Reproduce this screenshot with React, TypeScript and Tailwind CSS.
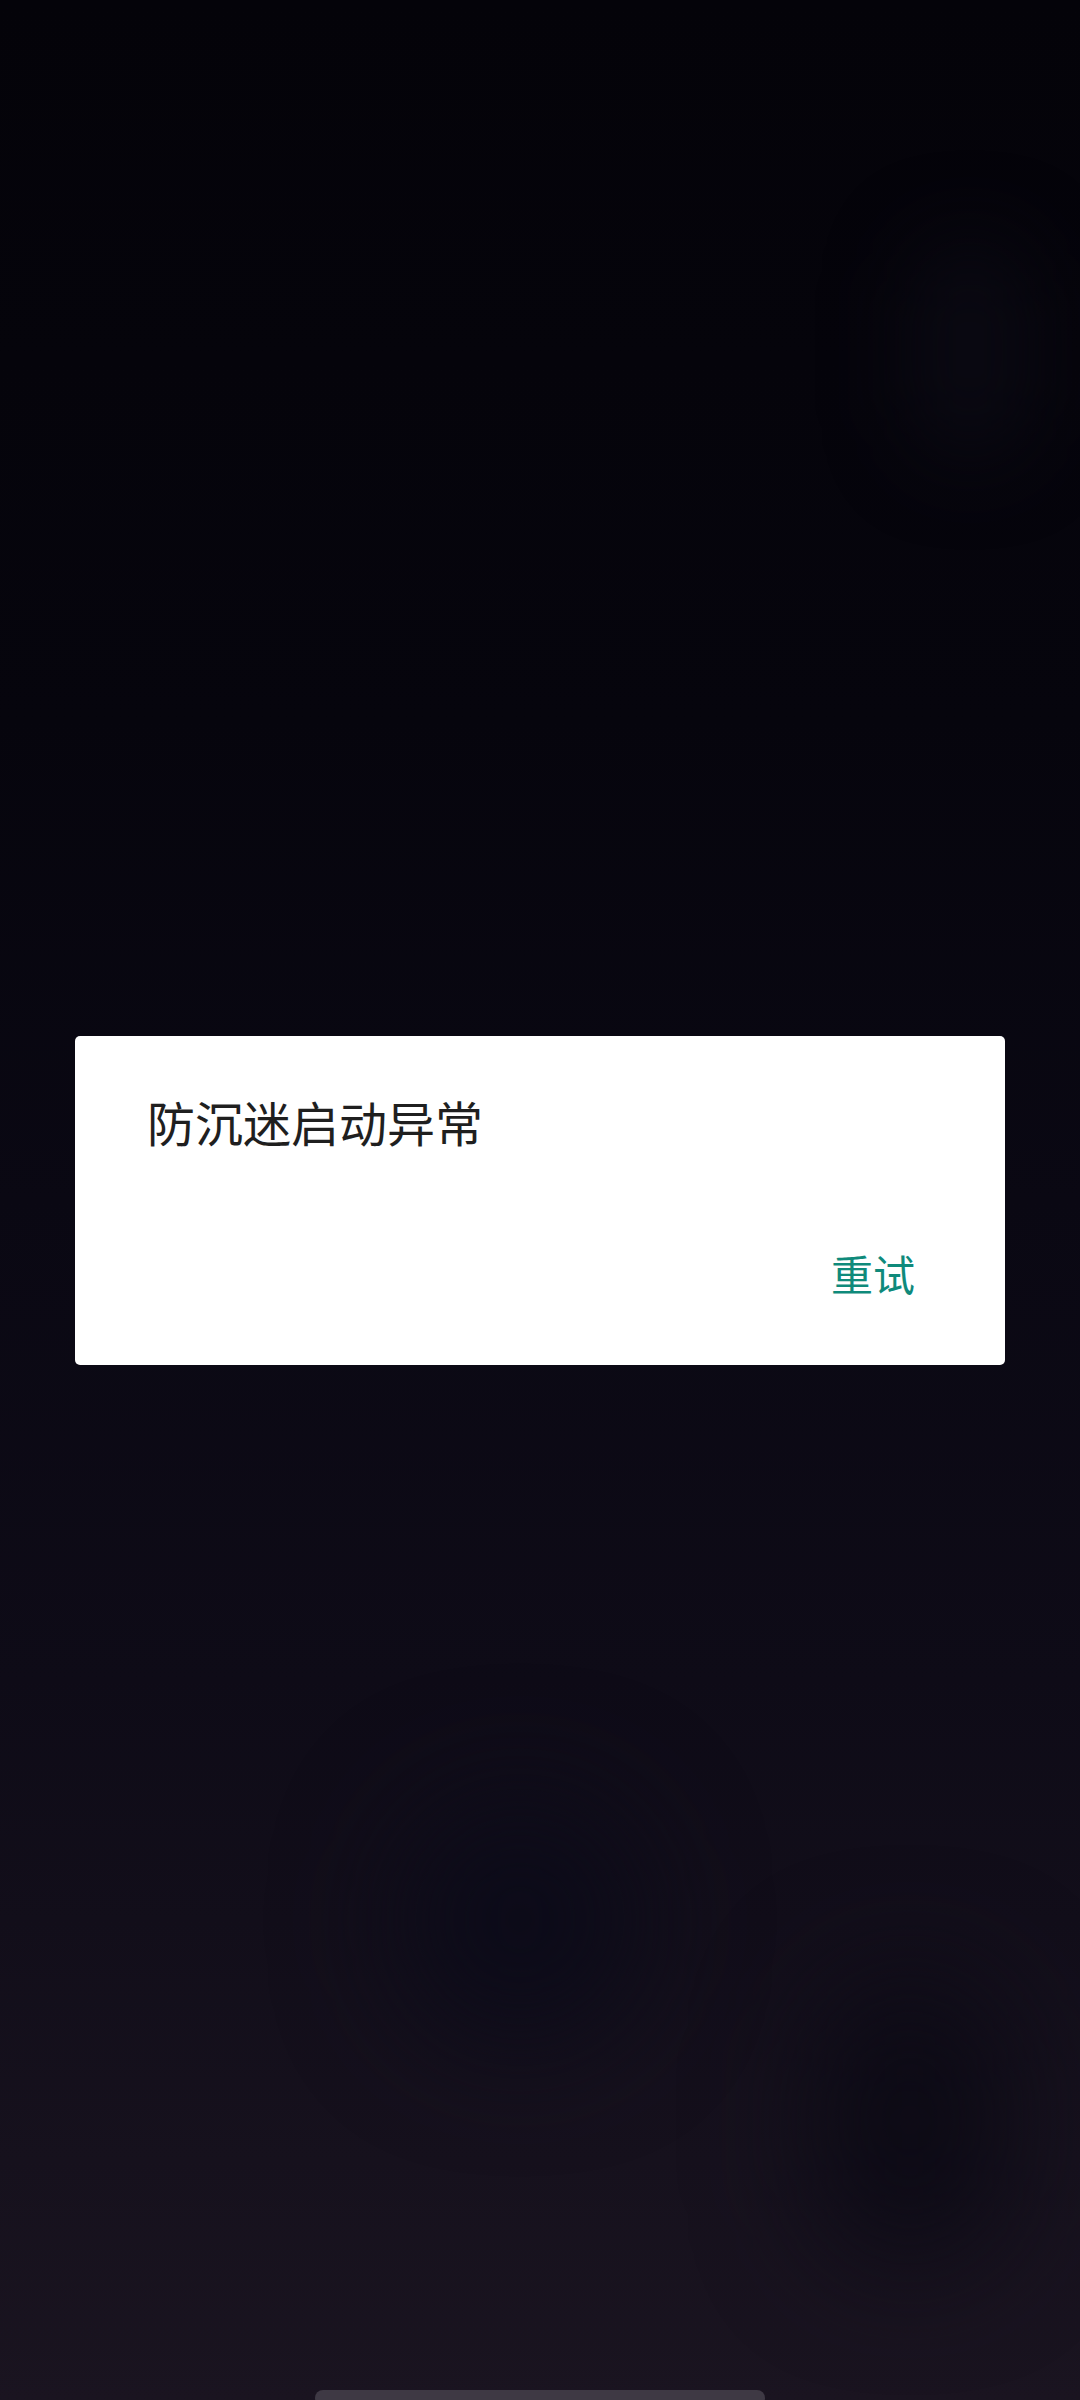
const cjk = { fontFamily: '"Noto Sans CJK SC", "Noto Sans", sans-serif' };

export default function App() {
  return (
    <div
      className="relative flex h-[2400px] w-[1080px] items-center justify-center overflow-hidden bg-[linear-gradient(180deg,#040309_0%,#06050d_30%,#0a0813_50%,#0e0b17_70%,#16111d_90%,#1a1420_100%)]"
      style={cjk}
    >
      {/* soft blobs in the wallpaper */}
      <div className="pointer-events-none absolute right-[50px] top-[240px] h-[220px] w-[120px] rounded-full bg-[#0a0912] blur-[40px]" />
      <div className="pointer-events-none absolute bottom-[140px] right-[80px] h-[280px] w-[180px] rounded-full bg-[#0c0a15] blur-[60px]" />
      <div className="pointer-events-none absolute bottom-[360px] left-[400px] h-[240px] w-[240px] rounded-full bg-[#0c0b19] blur-[60px]" />

      <div className="relative z-10 flex w-[930px] flex-col rounded-[5px] bg-white pb-[71px] pl-[72px] pr-[90px] pt-[61px]">
        <h1 className="text-[48px] leading-[48px] font-normal text-[#1f1f1f]">防沉迷启动异常</h1>
        <div className="mt-[107px] flex justify-end">
          <button className="text-[42px] leading-[42px] text-[#0f8a7b]">重试</button>
        </div>
      </div>

      <div className="absolute bottom-[-6px] left-[315px] h-[16px] w-[450px] rounded-full bg-[#3e3944]" />
    </div>
  );
}
